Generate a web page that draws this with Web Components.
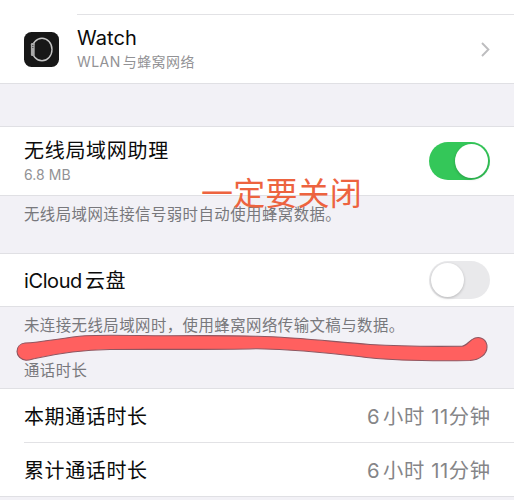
<!DOCTYPE html>
<html lang="zh-CN">
<head>
<meta charset="utf-8">
<title>蜂窝网络</title>
<style>
html,body{margin:0;width:514px;height:500px;overflow:hidden;background:#f2f1f6}
</style>
</head>
<body>
<settings-page></settings-page>
<script>
const define = (name, html) => {
  const t = document.createElement('template');
  t.innerHTML = html;
  customElements.define(name, class extends HTMLElement {
    constructor() {
      super();
      this.attachShadow({ mode: 'open' }).appendChild(t.content.cloneNode(true));
    }
  });
};

define('watch-icon', `
<style>:host{display:block;width:35px;height:35px}svg{display:block}</style>
<svg width="35" height="35" viewBox="0 0 35 35">
  <rect width="35" height="35" rx="7.5" fill="#171717"/>
  <ellipse cx="18" cy="17.5" rx="10" ry="11.3" fill="none" stroke="#c4c4c4" stroke-width="1.4"/>
  <rect x="6.9" y="11" width="3.8" height="13" rx="1.2" fill="#aaa"/>
  <path d="M8 13.5h1.5M8 15.5h1.5" stroke="#555" stroke-width=".9"/>
</svg>`);

define('chevron-icon', `
<style>:host{display:block;width:9px;height:15px}svg{display:block}</style>
<svg width="9" height="15" viewBox="0 0 9 15"><path d="M1 1l6.400 6.500L1 14" fill="none" stroke="#bdbdbf" stroke-width="1.9"/></svg>`);

define('toggle-switch', `
<style>
:host{display:flex;box-sizing:border-box;width:61px;height:38px;padding:2px;border-radius:19px;background:#e9e9eb}
i{display:block;width:33px;height:34px;border-radius:50%;background:#fff;box-shadow:0 1px 3px rgba(0,0,0,.22)}
:host([on]){background:#34c759;justify-content:flex-end}
</style><i></i>`);

define('setting-row', `
<style>
:host{display:flex;box-sizing:border-box;align-items:center;padding:0 24px;background:#fff;white-space:nowrap}
.main{display:flex;flex-direction:column;flex:1}
::slotted(*){flex:none}
</style>
<slot name="icon"></slot><div class="main"><slot></slot></div><slot name="end"></slot>`);

define('setting-note', `
<style>
:host{display:block;box-sizing:border-box;padding-left:24px;font-size:15.4px;letter-spacing:.47px;line-height:20px;color:#78787c;white-space:nowrap}
</style><slot></slot>`);

define('marker-stroke', `
<style>:host{display:block;position:absolute;left:0;top:325px}svg{display:block}</style>
<svg width="514" height="45" viewBox="0 325 514 45">
  <path d="M25 343C43 342 63 337.800 85 335.800C103 334.500 130 335.500 168 335.800C202 335.500 230 335.400 257 336.300C300 337.500 330 341.500 370 344.500C405 346.700 435 346.500 462 346.200C467 346 469 340 475 338C481 336 487 340 487 347C487 354 480 360 470 360.500C436 361 400 361 369 357.700C340 354.500 310 350 257 348.700C210 350 160 349 110 349.500C80 350 55 354 35 358.500C32 359 30 360.300 26 360.200C21 360 17 356 17 351.500C17 347 20 343.500 25 343Z" fill="#ff605f" stroke="#8e5660" stroke-width="1.1"/>
</svg>`);

define('marker-label', `
<style>:host{display:block;position:absolute;left:201px;top:171px;font-size:32px;letter-spacing:.2px;line-height:46px;color:#ed633f;white-space:nowrap}</style><slot></slot>`);

define('settings-page', `
<style>
:host{display:flex;position:relative;flex-direction:column;width:514px;height:500px;overflow:hidden;background:#f2f1f6;font-family:Inter,"Noto Sans CJK SC",sans-serif;color:#0b0b0b}
.top{height:14px;background:#fff}
.line{height:1px;flex:none;background:linear-gradient(#e2e2e5,#e2e2e5) right/var(--w) 100% no-repeat #fff}
.t{font-size:20px;line-height:28px;letter-spacing:.6px}
.s{font-size:14px;line-height:20px;letter-spacing:.45px;color:#929295}
.v{font-size:20.300px;line-height:28px;letter-spacing:.6px;color:#858588;margin-right:-.6px}
setting-row,setting-note,.top{flex:none}
.low{padding-top:2px}
.edge{border-bottom:1px solid #e0e0e4}
.gap{height:43px;box-sizing:border-box;flex:none;border-bottom:1px solid #e0e0e4}
</style>
<div class="top"></div><div class="line" style="--w:437px"></div>
<setting-row class="edge" style="height:69px">
  <watch-icon slot="icon" style="margin-right:18px"></watch-icon>
  <span class="t" style="letter-spacing:.1px;margin-top:-2px">Watch</span><span class="s">WLAN<span style="margin-left:2px">与蜂窝网络</span></span>
  <chevron-icon slot="end"></chevron-icon>
</setting-row>
<div class="gap"></div>
<setting-row class="edge" style="height:69px">
  <span class="t" style="margin-top:-1px;letter-spacing:.7px">无线局域网助理</span><span class="s" style="letter-spacing:.05px">6.8 MB</span>
  <toggle-switch on slot="end"></toggle-switch>
</setting-row>
<setting-note class="edge" style="height:58px;padding-top:9px">无线局域网连接信号弱时自动使用蜂窝数据。</setting-note>
<setting-row class="edge" style="height:53px">
  <span class="t low"><span style="letter-spacing:-.4px">iCloud</span><span style="margin-left:3px">云盘</span></span>
  <toggle-switch slot="end"></toggle-switch>
</setting-row>
<setting-note style="height:45px;padding-top:9px">未连接无线局域网时，使用蜂窝网络传输文稿与数据。</setting-note>
<setting-note class="edge" style="height:37px;padding-top:9px">通话时长</setting-note>
<setting-row style="height:53px"><span class="t low">本期通话时长</span><span class="v low" slot="end">6<span style="margin-left:3px">小时 11分钟</span></span></setting-row>
<div class="line" style="--w:490px"></div>
<setting-row class="edge" style="height:54px"><span class="t low">累计通话时长</span><span class="v low" slot="end">6<span style="margin-left:3px">小时 11分钟</span></span></setting-row>
<marker-stroke></marker-stroke>
<marker-label>一定要关闭</marker-label>`);
</script>
</body>
</html>
